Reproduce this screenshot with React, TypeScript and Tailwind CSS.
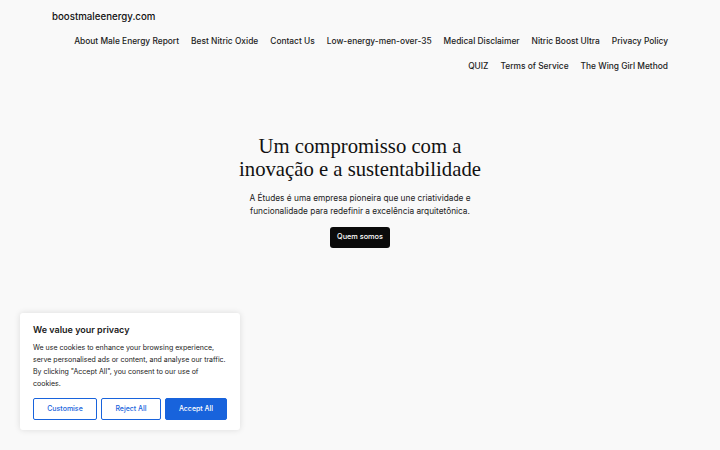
const App = () => {
  const navRow1 = [
    "About Male Energy Report",
    "Best Nitric Oxide",
    "Contact Us",
    "Low-energy-men-over-35",
    "Medical Disclaimer",
    "Nitric Boost Ultra",
    "Privacy Policy",
  ];
  const navRow2 = ["QUIZ", "Terms of Service", "The Wing Girl Method"];

  return (
    <div className="relative min-h-[450px] w-full bg-[#f9f9f9] text-[#111] font-['Inter',sans-serif]">
      <header className="px-[52px] pt-[10px]">
        <div className="text-[9.7px] font-medium leading-[14px]">boostmaleenergy.com</div>
        <nav className="flex flex-col items-end pt-[10px] text-[8.4px] font-medium leading-[14px] text-[#222]">
          <div className="flex gap-x-[12px] whitespace-nowrap">
            {navRow1.map((item) => (
              <span key={item}>{item}</span>
            ))}
          </div>
          <div className="flex gap-x-[12px] pt-[11px] whitespace-nowrap">
            {navRow2.map((item) => (
              <span key={item}>{item}</span>
            ))}
          </div>
        </nav>
      </header>

      <main className="flex flex-col items-center pt-[62px] text-center">
        <h1 className="font-['Liberation_Serif',serif] text-[20.7px] leading-[23px] font-normal text-[#111]">
          Um compromisso com a
          <br />
          inovação e a sustentabilidade
        </h1>
        <p className="mt-[11px] text-[8.3px] leading-[13px] text-[#222]">
          A Études é uma empresa pioneira que une criatividade e
          <br />
          funcionalidade para redefinir a excelência arquitetônica.
        </p>
        <button className="mt-[9px] h-[21px] rounded-[3px] bg-[#0b0b0b] px-[7px] text-[7.3px] font-medium text-white">
          Quem somos
        </button>
      </main>

      {/* Cookie consent */}
      <div className="absolute left-[20px] top-[313px] w-[220px] rounded-[3px] bg-white px-[13px] pt-[10px] pb-[10px] shadow-[0_0_6px_rgba(0,0,0,0.12)]">
        <h2 className="text-[9px] font-semibold leading-[14px] text-[#212121]">We value your privacy</h2>
        <p className="mt-[5px] whitespace-nowrap text-[7px] leading-[12px] text-[#212121]">
          We use cookies to enhance your browsing experience,
          <br />
          serve personalised ads or content, and analyse our traffic.
          <br />
          By clicking "Accept All", you consent to our use of
          <br />
          cookies.
        </p>
        <div className="mt-[8px] flex gap-[4px]">
          <button className="h-[22px] w-[64px] rounded-[2px] border border-[#1863dc] text-[7px] font-medium text-[#1863dc]">
            Customise
          </button>
          <button className="h-[22px] w-[60px] rounded-[2px] border border-[#1863dc] text-[7px] font-medium text-[#1863dc]">
            Reject All
          </button>
          <button className="h-[22px] w-[62px] rounded-[2px] border border-[#1863dc] bg-[#1863dc] text-[7px] font-medium text-white">
            Accept All
          </button>
        </div>
      </div>
    </div>
  );
};

export default App;
